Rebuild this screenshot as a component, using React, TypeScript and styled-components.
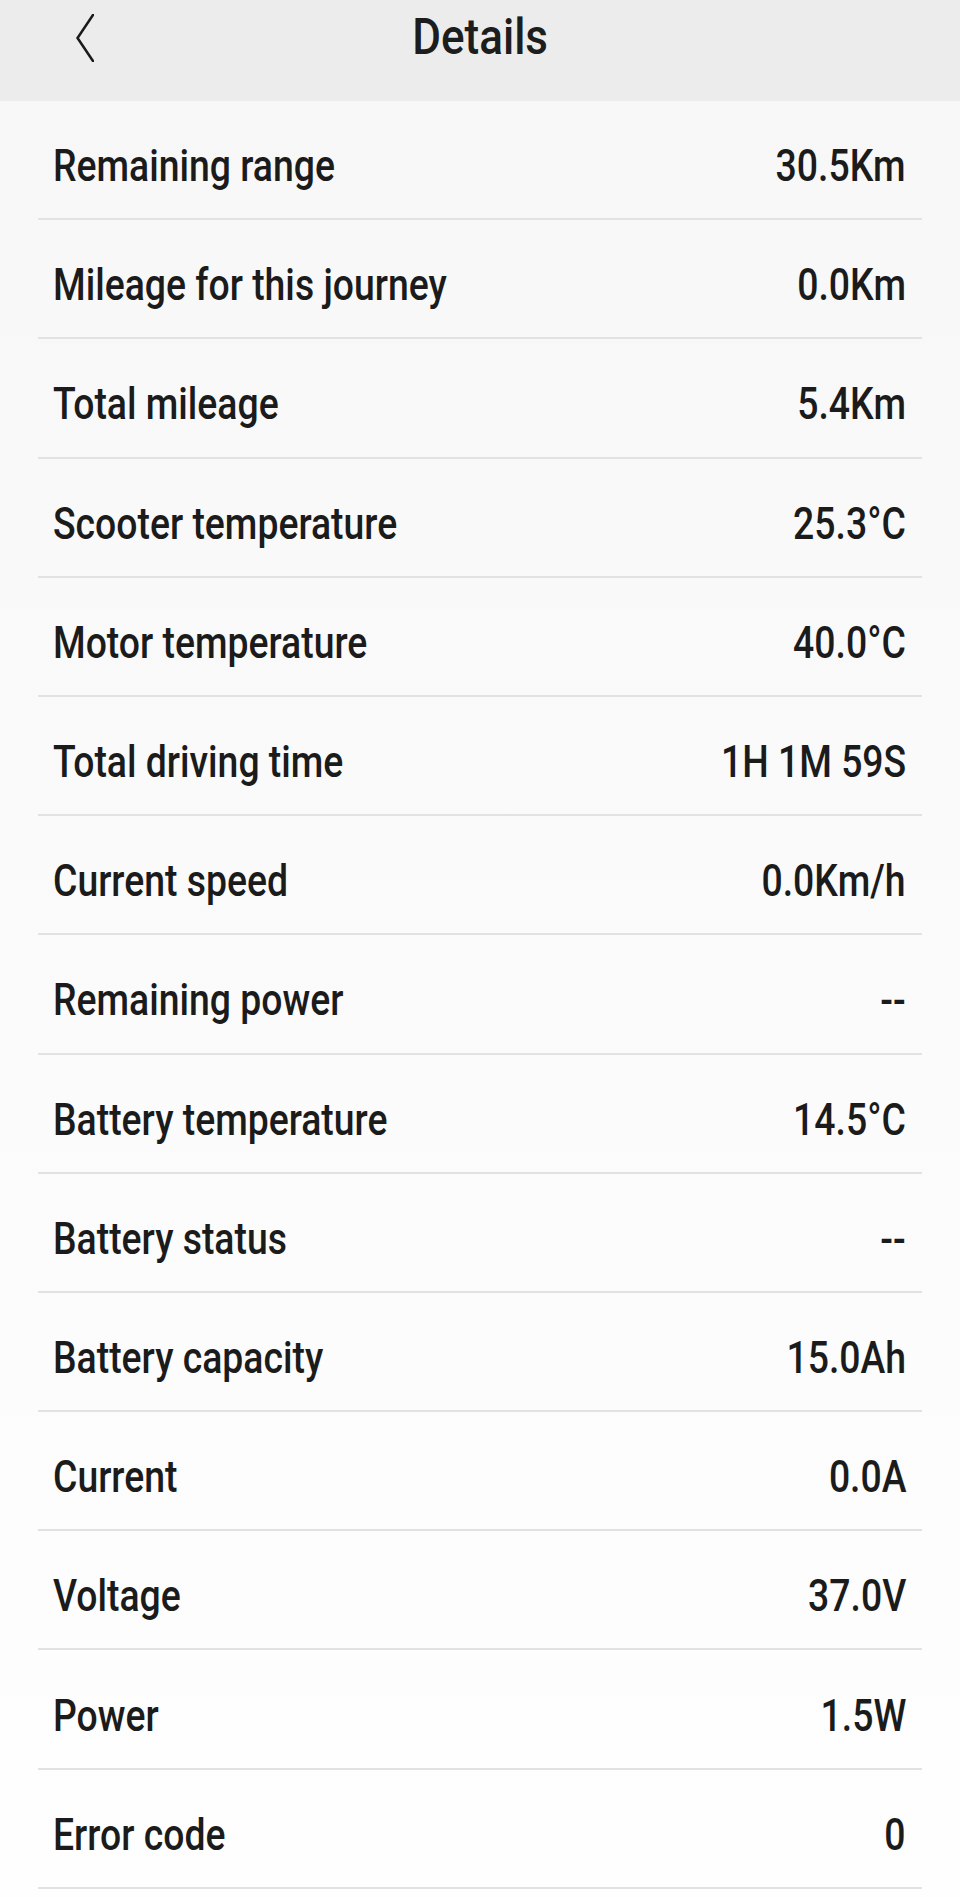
import React from "react";
import styled, { createGlobalStyle } from "styled-components";

const GlobalStyle = createGlobalStyle`
  html, body {
    margin: 0;
    padding: 0;
    background: #fdfdfd;
  }
  body {
    font-family: Roboto, "Noto Sans", "Liberation Sans", sans-serif;
    color: #1b1b1b;
  }
`;

const Page = styled.div`
  width: 960px;
  min-height: 1898px;
  display: flex;
  flex-direction: column;
  background: linear-gradient(#f7f7f7, #fefefe);
`;

const Header = styled.header`
  height: 101px;
  flex-shrink: 0;
  background: #ececec;
  display: grid;
  grid-template-columns: 1fr auto 1fr;
  align-items: start;
`;

const BackButton = styled.button`
  justify-self: start;
  margin: 14px 0 0 76px;
  padding: 0;
  border: none;
  background: none;
  width: 18px;
  height: 48px;
  display: flex;
`;

const Title = styled.h1`
  margin: 0;
  font-size: 50px;
  font-weight: 500;
  line-height: 74px;
  color: #1d1d1d;
  transform: scaleX(0.88);
  transform-origin: center;
`;

const List = styled.ul`
  list-style: none;
  margin: 0;
  padding: 0 38px;
`;

const Row = styled.li`
  height: 119.2px;
  box-sizing: border-box;
  padding: 13px 16px 0 15px;
  border-bottom: 2px solid #e2e2e2;
  display: flex;
  align-items: center;
  justify-content: space-between;
`;

interface TextProps {
  align: "left" | "right";
}

const Text = styled.span<TextProps>`
  display: inline-block;
  font-size: 45px;
  font-weight: 500;
  line-height: 54px;
  white-space: nowrap;
  transform: scaleX(0.83);
  transform-origin: ${(props) => props.align} center;
`;

const rows: [string, string][] = [
  ["Remaining range", "30.5Km"],
  ["Mileage for this journey", "0.0Km"],
  ["Total mileage", "5.4Km"],
  ["Scooter temperature", "25.3°C"],
  ["Motor temperature", "40.0°C"],
  ["Total driving time", "1H 1M 59S"],
  ["Current speed", "0.0Km/h"],
  ["Remaining power", "--"],
  ["Battery temperature", "14.5°C"],
  ["Battery status", "--"],
  ["Battery capacity", "15.0Ah"],
  ["Current", "0.0A"],
  ["Voltage", "37.0V"],
  ["Power", "1.5W"],
  ["Error code", "0"],
];

const App: React.FC = () => {
  return (
    <Page>
      <GlobalStyle />
      <Header>
        <BackButton aria-label="Back">
          <svg width="18" height="48" viewBox="0 0 18 48" fill="none">
            <path
              d="M17 1 L1.5 24 L17 47"
              stroke="#1a1a1a"
              strokeWidth="2.6"
              strokeLinecap="square"
              strokeLinejoin="miter"
            />
          </svg>
        </BackButton>
        <Title>Details</Title>
      </Header>
      <List>
        {rows.map(([label, value]) => (
          <Row key={label}>
            <Text align="left">{label}</Text>
            <Text align="right">{value}</Text>
          </Row>
        ))}
      </List>
    </Page>
  );
};

export default App;
